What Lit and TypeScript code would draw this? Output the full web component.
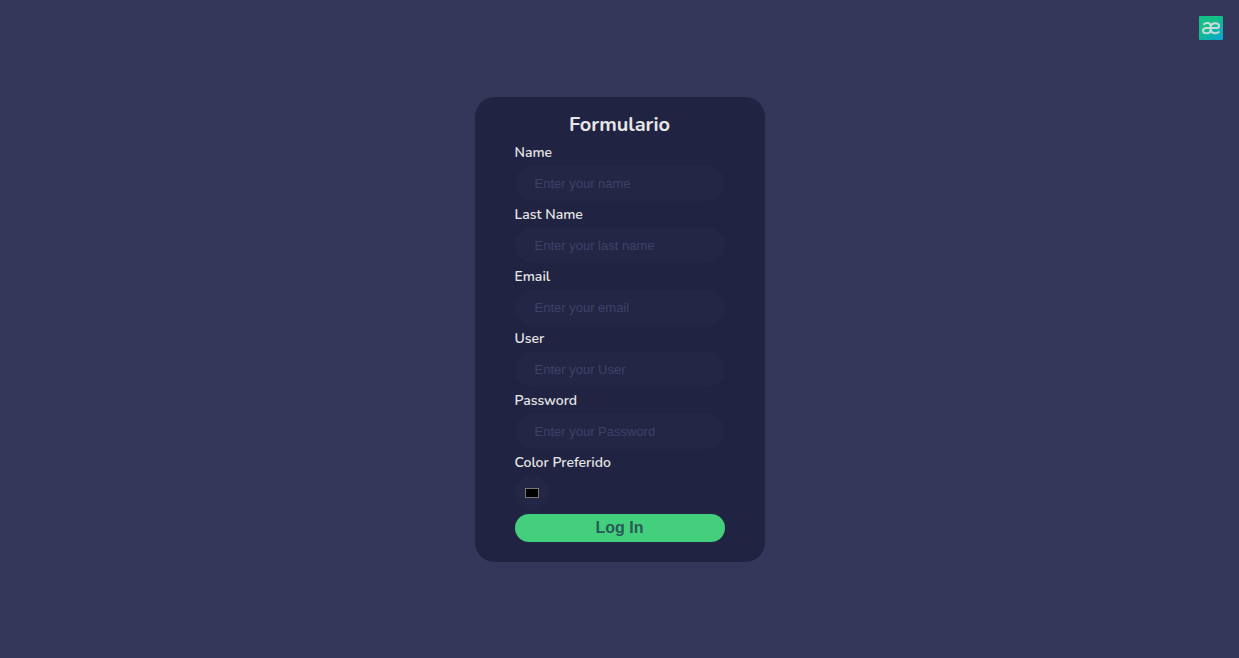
import { LitElement, html, css } from "lit";
import { customElement } from "lit/decorators.js";

const fields = [
  { id: "name", label: "Name", type: "text", placeholder: "Enter your name" },
  { id: "last-name", label: "Last Name", type: "text", placeholder: "Enter your last name" },
  { id: "email", label: "Email", type: "email", placeholder: "Enter your email" },
  { id: "user", label: "User", type: "text", placeholder: "Enter your User" },
  { id: "password", label: "Password", type: "password", placeholder: "Enter your Password" },
];

@customElement("app-root")
export class AppRoot extends LitElement {
  static styles = css`
    :host {
      position: relative;
      display: grid;
      place-items: center;
      min-height: 100vh;
      background: #35375a;
      color: #e6e6e6;
      font-family: Nunito, Lato, "Open Sans", sans-serif;
    }
    * {
      box-sizing: border-box;
    }
    .badge {
      position: absolute;
      top: 16px;
      right: 16px;
      width: 24px;
      height: 24px;
    }
    .badge svg {
      display: block;
    }
    .card {
      display: flex;
      flex-direction: column;
      gap: 4px;
      width: 290px;
      padding: 14px 40px 20px;
      border-radius: 20px;
      background: #212342;
    }
    .title {
      margin: 0;
      font-size: 20px;
      line-height: 28px;
      font-weight: 700;
      text-align: center;
    }
    .label {
      font-size: 14px;
      line-height: 19px;
      font-weight: 600;
    }
    .input {
      width: 100%;
      height: 35px;
      padding: 0 20px;
      border: 0;
      border-radius: 20px;
      outline: 0;
      background: #242645;
      color: #e6e6e6;
      font-family: "Liberation Sans", Arial, sans-serif;
      font-size: 13px;
    }
    .input::placeholder {
      color: #3f4169;
      opacity: 1;
    }
    .color {
      appearance: none;
      width: 34px;
      height: 34px;
      padding: 12px 10px;
      border: 0;
      border-radius: 50%;
      background: #242645;
    }
    .color::-webkit-color-swatch-wrapper {
      padding: 0;
    }
    .color::-webkit-color-swatch {
      border: 1px solid #777777;
      border-radius: 0;
    }
    .submit {
      height: 28px;
      padding: 0;
      border: 0;
      border-radius: 20px;
      background: #44cf7c;
      color: #285a58;
      font-family: "Liberation Sans", Arial, sans-serif;
      font-size: 16px;
      font-weight: 700;
      cursor: pointer;
    }
  `;

  render() {
    return html`
      <a class="badge" href="#" aria-label="Home">
        <svg width="24" height="24" viewBox="0 0 24 24" aria-hidden="true">
          <defs>
            <linearGradient id="g" x1="0.2" y1="0" x2="1" y2="1">
              <stop offset="0.3" stop-color="#14bf86" />
              <stop offset="1" stop-color="#08a4d4" />
            </linearGradient>
          </defs>
          <rect width="24" height="24" rx="1" fill="url(#g)" />
          <path
            d="M5 8.2C7 6.6 11.2 6.4 11.6 9.6V13.4C11.6 16 9.8 17.3 7.4 17.3C5.2 17.3 4 16.3 4 14.7C4 12.9 5.4 12.1 7.6 12.1H17.3C19.1 12.1 20 11.3 20 9.9C20 8.3 18.6 7.2 16.4 7.2C13.6 7.2 11.6 8.9 11.6 12C11.6 15.2 13.4 17.3 16.3 17.3C17.8 17.3 19 16.9 19.9 16.1"
            fill="none"
            stroke="#c4dcd8"
            stroke-width="2"
            stroke-linecap="round"
          />
        </svg>
      </a>
      <form class="card" @submit=${(e: Event) => e.preventDefault()}>
        <h1 class="title">Formulario</h1>
        ${fields.map(
          (f) => html`
            <label class="label" for=${f.id}>${f.label}</label>
            <input class="input" id=${f.id} name=${f.id} type=${f.type} placeholder=${f.placeholder} />
          `
        )}
        <label class="label" for="color">Color Preferido</label>
        <input class="color" id="color" name="color" type="color" value="#000000" />
        <button class="submit" type="submit">Log In</button>
      </form>
    `;
  }
}
